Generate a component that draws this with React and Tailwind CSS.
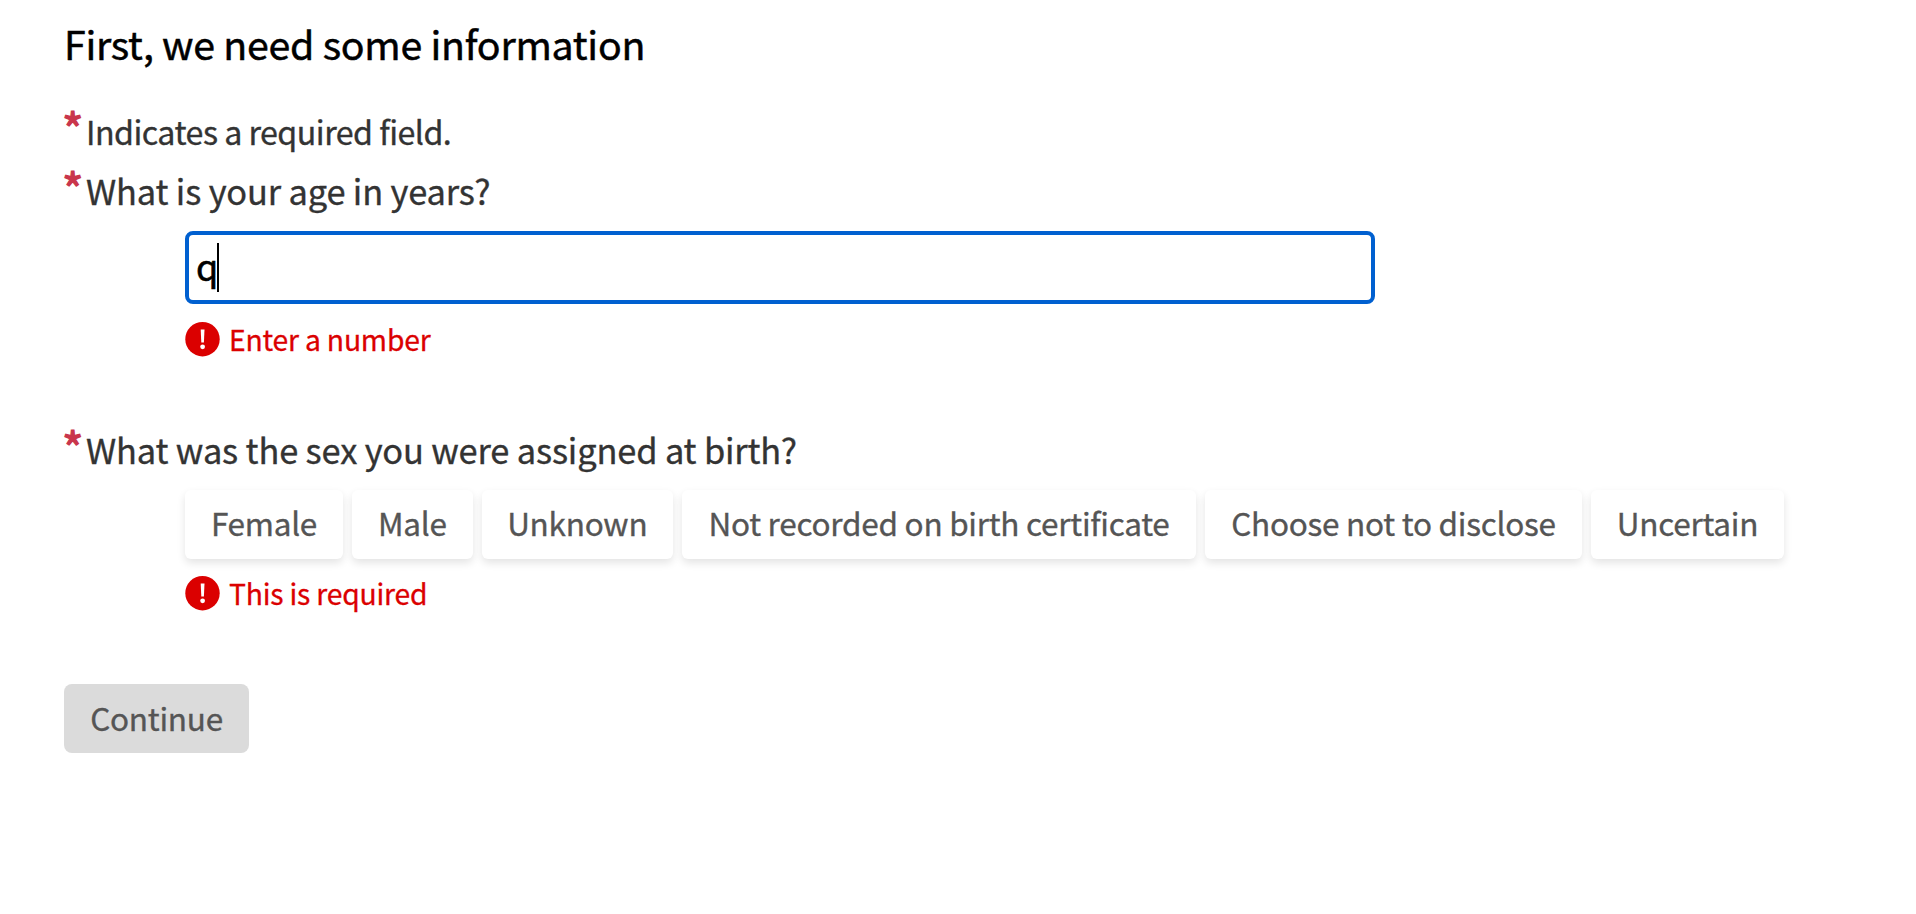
const Star = () => (
  <span className="relative -top-[2px] -left-[2px] mr-[4px] h-[48px] w-[18px] shrink-0 text-[46px] leading-[50px] tracking-normal text-[#c9364c] [-webkit-text-stroke:1.3px]">*</span>
);

const Label = ({ className, children }) => (
  <div className={"flex items-start text-[#333333] [-webkit-text-stroke:0.35px] " + className}>
    <Star />
    <span>{children}</span>
  </div>
);

const ErrorText = ({ children, className }) => (
  <div className={"flex h-[35px] items-center gap-[9px] " + className}>
    <svg viewBox="0 0 35 35" className="size-[35px] shrink-0">
      <circle cx="17.5" cy="17.2" r="17.2" fill="#db0000" />
      <path d="M15.7 7.5h3.8l-.6 13h-2.6z" fill="#fff" />
      <circle cx="17.6" cy="24.8" r="2.4" fill="#fff" />
    </svg>
    <span className="pb-[2px] text-[28.3px] leading-[33px] tracking-[-0.2px] text-[#db0000] [-webkit-text-stroke:0.3px]">{children}</span>
  </div>
);

const options = [
  ["Female", "w-[158px]"],
  ["Male", "w-[120.5px]"],
  ["Unknown", "w-[191.5px]"],
  ["Not recorded on birth certificate", "w-[514px]"],
  ["Choose not to disclose", "w-[377px]"],
  ["Uncertain", "w-[193px]"],
];

export default function App() {
  return (
    <main className="flex h-[914px] w-[1916px] flex-col items-start overflow-hidden bg-white pl-[64px] font-['Noto_Sans_CJK_SC',sans-serif] whitespace-nowrap">
      <h1 className="mt-[17px] h-[52px] text-[39.3px] leading-[52px] tracking-[-0.26px] text-black [-webkit-text-stroke:0.5px]">First, we need some information</h1>
      <Label className="mt-[36px] h-[50px] text-[32.2px] leading-[52px] tracking-[-0.52px]">Indicates a required field.</Label>
      <Label className="mt-[10px] h-[50px] text-[34.4px] leading-[50px] tracking-[-0.15px]">What is your age in years?</Label>
      <div className="mt-[16px] ml-[121px] flex h-[73px] w-[1190px] items-center rounded-[8px] border-4 border-[#0060d0] pl-[7px]">
        <span className="-mr-[1px] h-[65px] text-[36px] leading-[60px] text-black [-webkit-text-stroke:0.6px]">q</span>
        <span className="h-[49px] w-[2px] bg-black" />
      </div>
      <ErrorText className="mt-[18px] ml-[121px]">Enter a number</ErrorText>
      <Label className="mt-[67px] h-[50px] text-[34.4px] leading-[50px] tracking-[-0.15px]">What was the sex you were assigned at birth?</Label>
      <div className="mt-[16px] ml-[121px] flex gap-[9px]">
        {options.map(([label, width]) => (
          <button
            key={label}
            className={"h-[69px] shrink-0 rounded-[6px] bg-white pb-[4px] text-center text-[31.5px] leading-[65px] tracking-[-0.25px] text-[#555555] shadow-[0_4px_8px_rgba(0,0,0,0.11)] [-webkit-text-stroke:0.35px] " + width}
          >
            {label}
          </button>
        ))}
      </div>
      <ErrorText className="mt-[17px] ml-[121px]">This is required</ErrorText>
      <button className="mt-[73px] h-[69px] w-[185px] rounded-[8px] bg-[#dbdbdb] pb-[3px] text-center text-[31.5px] leading-[65px] tracking-[-0.25px] text-[#555555] [-webkit-text-stroke:0.35px]">Continue</button>
    </main>
  );
}
